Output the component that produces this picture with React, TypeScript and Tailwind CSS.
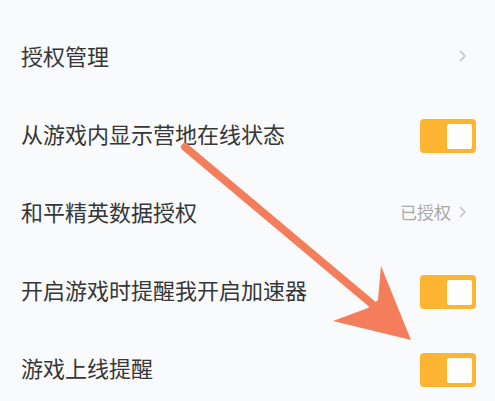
import React from 'react';

const font = { fontFamily: '"Noto Sans CJK SC", "Noto Sans", sans-serif' };

const Chevron = () => (
    <svg width="8" height="12" viewBox="0 0 8 12" className="text-[#c4c4c4]">
        <path d="M1.5 1.5 L6 6 L1.5 10.5" fill="none" stroke="currentColor" strokeWidth="1.6" strokeLinecap="round" strokeLinejoin="round" />
    </svg>
);

const Toggle = () => (
    <div className="w-[56px] h-[34px] rounded-[4px] bg-[#fbb533] flex items-center justify-end pr-[4px]">
        <div className="w-[25px] h-[25px] rounded-[2px] bg-[#fdfdfb]" />
    </div>
);

type Row = { label: string; kind: 'link' | 'toggle'; value?: string };

const rows: Row[] = [
    { label: '授权管理', kind: 'link' },
    { label: '从游戏内显示营地在线状态', kind: 'toggle' },
    { label: '和平精英数据授权', kind: 'link', value: '已授权' },
    { label: '开启游戏时提醒我开启加速器', kind: 'toggle' },
    { label: '游戏上线提醒', kind: 'toggle' },
];

export default function App() {
    return (
        <div className="relative w-[495px] h-[401px] overflow-hidden bg-[#f9fafc]" style={font}>
            <div className="flex flex-col pt-[19px]">
                {rows.map((r) => (
                    <div key={r.label} className="h-[78px] flex items-center justify-between pl-[21px] pr-[19px]">
                        <span className="text-[22px] text-[#363636] leading-none mb-[6px]">{r.label}</span>
                        {r.kind === 'toggle' ? (
                            <Toggle />
                        ) : (
                            <div className="flex items-center gap-[8px] mr-[9px] mb-[4px]">
                                {r.value && <span className="text-[17px] text-[#a9a9a9] leading-none mb-[2px]">{r.value}</span>}
                                <Chevron />
                            </div>
                        )}
                    </div>
                ))}
            </div>

            {/* annotation arrow */}
            <svg className="absolute inset-0 pointer-events-none" width="495" height="401" viewBox="0 0 495 401">
                <path d="M185 147 L372 304" stroke="#f47e5b" strokeWidth="8" strokeLinecap="round" />
                <polygon points="381,266 411,340 333,321 368,308 378,300" fill="#f47e5b" />
            </svg>
        </div>
    );
}
